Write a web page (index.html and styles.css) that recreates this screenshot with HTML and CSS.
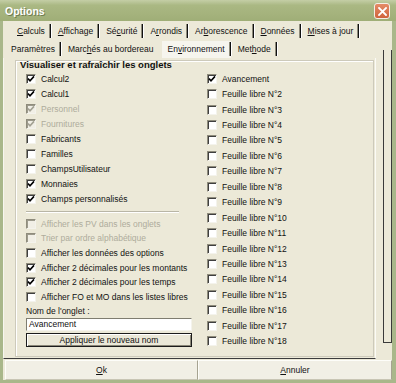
FILE: index.html
```html
<!DOCTYPE html>
<html lang="fr">
  <head>
    <meta charset="UTF-8">
    <title>Options</title>
    <link rel="stylesheet" href="styles.css">
  </head>
  <body>
    <div class="window">
      <div class="titlebar">
        <span class="title">Options</span>
        <span class="close">
          <svg width="9" height="9" viewBox="0 0 9 9"><path d="M1 1L8 8M8 1L1 8" stroke="#fff" stroke-width="1.8" stroke-linecap="square"/></svg>
        </span>
      </div>
      <div class="client">
        <div class="tabrow row1">
          <span class="tab"><u>C</u>alculs</span>
          <span class="tab"><u>A</u>ffichage</span>
          <span class="tab">Sé<u>c</u>urité</span>
          <span class="tab">A<u>r</u>rondis</span>
          <span class="tab">Ar<u>b</u>orescence</span>
          <span class="tab"><u>D</u>onnées</span>
          <span class="tab"><u>M</u>ises à jour</span>
        </div>
        <div class="tabrow row2">
          <span class="tab">Paramètres</span>
          <span class="tab nosep">Marc<u>h</u>és au bordereau</span>
          <span class="tab active">En<u>v</u>ironnement</span>
          <span class="tab">Met<u>h</u>ode</span>
        </div>
        <div class="page">
          <div class="pane">
            <div class="group">
              <div class="group-title">Visualiser et rafraîchir les onglets</div>
              <div class="cols">
                <div class="col left">
                  <div class="chk on"><span class="box"><svg viewBox="0 0 8 8"><path d="M1 3.6L3 5.8L7 1.4"/></svg></span>Calcul2</div>
                  <div class="chk on"><span class="box"><svg viewBox="0 0 8 8"><path d="M1 3.6L3 5.8L7 1.4"/></svg></span>Calcul1</div>
                  <div class="chk on off"><span class="box"><svg viewBox="0 0 8 8"><path d="M1 3.6L3 5.8L7 1.4"/></svg></span>Personnel</div>
                  <div class="chk on off"><span class="box"><svg viewBox="0 0 8 8"><path d="M1 3.6L3 5.8L7 1.4"/></svg></span>Fournitures</div>
                  <div class="chk"><span class="box"></span>Fabricants</div>
                  <div class="chk"><span class="box"></span>Familles</div>
                  <div class="chk"><span class="box"></span>ChampsUtilisateur</div>
                  <div class="chk on"><span class="box"><svg viewBox="0 0 8 8"><path d="M1 3.6L3 5.8L7 1.4"/></svg></span>Monnaies</div>
                  <div class="chk on"><span class="box"><svg viewBox="0 0 8 8"><path d="M1 3.6L3 5.8L7 1.4"/></svg></span>Champs personnalisés</div>
                  <div class="sep"></div>
                  <div class="chk small off"><span class="box"></span>Afficher les PV dans les onglets</div>
                  <div class="chk small off"><span class="box"></span>Trier par ordre alphabétique</div>
                  <div class="chk small"><span class="box"></span>Afficher les données des options</div>
                  <div class="chk small on"><span class="box"><svg viewBox="0 0 8 8"><path d="M1 3.6L3 5.8L7 1.4"/></svg></span>Afficher 2 décimales pour les montants</div>
                  <div class="chk small on"><span class="box"><svg viewBox="0 0 8 8"><path d="M1 3.6L3 5.8L7 1.4"/></svg></span>Afficher 2 décimales pour les temps</div>
                  <div class="chk small"><span class="box"></span>Afficher FO et MO dans les listes libres</div>
                  <div class="field-label">Nom de l'onglet :</div>
                  <div class="textbox">Avancement</div>
                  <div class="apply"><span>Appliquer le nouveau nom</span></div>
                </div>
                <div class="col right">
                  <div class="chk tall on"><span class="box"><svg viewBox="0 0 8 8"><path d="M1 3.6L3 5.8L7 1.4"/></svg></span>Avancement</div>
                  <div class="chk tall"><span class="box"></span>Feuille libre N°2</div>
                  <div class="chk tall"><span class="box"></span>Feuille libre N°3</div>
                  <div class="chk tall"><span class="box"></span>Feuille libre N°4</div>
                  <div class="chk tall"><span class="box"></span>Feuille libre N°5</div>
                  <div class="chk tall"><span class="box"></span>Feuille libre N°6</div>
                  <div class="chk tall"><span class="box"></span>Feuille libre N°7</div>
                  <div class="chk tall"><span class="box"></span>Feuille libre N°8</div>
                  <div class="chk tall"><span class="box"></span>Feuille libre N°9</div>
                  <div class="chk tall"><span class="box"></span>Feuille libre N°10</div>
                  <div class="chk tall"><span class="box"></span>Feuille libre N°11</div>
                  <div class="chk tall"><span class="box"></span>Feuille libre N°12</div>
                  <div class="chk tall"><span class="box"></span>Feuille libre N°13</div>
                  <div class="chk tall"><span class="box"></span>Feuille libre N°14</div>
                  <div class="chk tall"><span class="box"></span>Feuille libre N°15</div>
                  <div class="chk tall"><span class="box"></span>Feuille libre N°16</div>
                  <div class="chk tall"><span class="box"></span>Feuille libre N°17</div>
                  <div class="chk tall"><span class="box"></span>Feuille libre N°18</div>
                </div>
              </div>
            </div>
          </div>
          <div class="strip"></div>
        </div>
        <div class="footer">
          <div class="btn"><span><u>O</u>k</span></div>
          <div class="btn"><span><u>A</u>nnuler</span></div>
        </div>
      </div>
    </div>
  </body>
</html>
```

FILE: styles.css
```css
* {
    box-sizing: border-box;
}
body {
    margin: 0;
    padding: 0;
    font-family: Tahoma, "Liberation Sans", Arial, sans-serif;
    font-size: 8.5px;
    color: #111;
    background: #fff;
}
u {
    text-decoration: underline;
    text-underline-offset: 1px;
}
.window {
    width: 396px;
    height: 383px;
    display: flex;
    flex-direction: column;
    background: #ece9d8;
}
.titlebar {
    height: 21px;
    display: flex;
    align-items: center;
    justify-content: space-between;
    padding: 0 6px 0 5px;
    background: linear-gradient(to bottom, #c4cea6 0, #aab883 25%, #a4b27c 70%, #9fae77 100%);
}
.title {
    color: #fff;
    font-weight: bold;
    font-size: 10.5px;
    text-shadow: 1px 1px 0 #6f7d4f;
}
.close {
    width: 16px;
    height: 16px;
    border: 1px solid #f4eee6;
    border-radius: 3px;
    background: linear-gradient(to bottom, #e48b66, #d0643d);
    display: flex;
    align-items: center;
    justify-content: center;
    margin-top: 1px;
}
.close svg {
    display: block;
}
.client {
    flex: 1;
    display: flex;
    flex-direction: column;
    border-style: solid;
    border-color: #a9b78a;
    border-width: 0 4px 3px 3px;
}
.tabrow {
    height: 18px;
    display: flex;
    align-items: center;
}
.row1 {
    margin-top: 1px;
    padding-left: 7px;
}
.row2 {
    padding-left: 1px;
}
.tab {
    display: flex;
    align-items: center;
    height: 17px;
    padding-left: 7px;
    white-space: nowrap;
}
.tab::after {
    content: "";
    width: 1px;
    height: 14px;
    margin-left: 5px;
    background: #111;
    box-shadow: 1px 0 0 #fff, -1px 0 0 #8d8a7a;
}
.tab.nosep::after {
    background: transparent;
    box-shadow: none;
}
.tab.active {
    background: #f6f5ee;
    margin-left: 3px;
    padding-left: 5px;
}
.page {
    height: 301px;
    display: flex;
}
.pane {
    width: 373px;
    border-bottom: 1px solid #3c3c3c;
    border-right: 1px solid #fbfbf6;
    border-left: 1px solid #f7f6ef;
}
.strip {
    width: 9px;
    height: 293px;
    margin-left: 7px;
    margin-top: -8px;
    border: 1px solid #3a3a3a;
    border-top: 0;
}
.group {
    margin: 2px 0 0 11px;
    width: 359px;
    height: 297px;
    border: 1px solid #cdcabb;
    box-shadow: inset 1px 1px 0 #fff;
}
.group-title {
    font-weight: bold;
    font-size: 9.5px;
    line-height: 11px;
    margin: -2px 0 0 4px;
}
.cols {
    display: flex;
    padding-top: 1px;
}
.col.left {
    width: 191px;
    padding-left: 10px;
}
.col.right {
    flex: 1;
}
.chk {
    height: 15.1px;
    display: flex;
    align-items: center;
    white-space: nowrap;
}
.chk.small {
    height: 14.6px;
}
.chk.tall {
    height: 15.45px;
}
.box {
    width: 10px;
    height: 10px;
    margin-right: 5px;
    background: #fff;
    border: 1px solid;
    border-color: #8f8c7c #f4f3ec #f4f3ec #8f8c7c;
    box-shadow: inset 1px 1px 0 #3f3f3f;
    display: flex;
    align-items: center;
    justify-content: center;
}
.box svg {
    width: 8px;
    height: 8px;
    fill: none;
    stroke: #000;
    stroke-width: 1.6;
}
.chk.off {
    color: #aeac9c;
}
.chk.off .box {
    background: #f1efe6;
    box-shadow: inset 1px 1px 0 #9c9a8c;
}
.chk.off .box svg {
    stroke: #a3a193;
}
.sep {
    height: 9.6px;
    display: flex;
    align-items: center;
}
.sep::after {
    content: "";
    width: 153px;
    height: 1px;
    background: #b9b6a6;
    box-shadow: 0 1px 0 #fff;
}
.field-label {
    height: 14px;
    display: flex;
    align-items: center;
}
.textbox {
    width: 166px;
    height: 13px;
    background: #fff;
    border: 1px solid;
    border-color: #7f7d70 #f4f3ec #f4f3ec #7f7d70;
    padding-left: 2px;
    line-height: 11px;
}
.apply {
    width: 166px;
    height: 14px;
    margin-top: 2px;
    border: 1px solid #1c1c1c;
    box-shadow: inset 1px 1px 0 #fff, inset -1px -1px 0 #8a8778;
    display: flex;
    align-items: center;
    justify-content: center;
    background: #ebe8d8;
}
.apply span {
    padding: 0 2px;
}
.footer {
    display: flex;
    height: 21px;
    padding: 1px 0 0 2px;
}
.btn {
    height: 20px;
    display: flex;
    align-items: center;
    justify-content: center;
    background: #f1efe5;
    border: 1px solid;
    border-color: #fdfdf9 #a6a391 #c8c5b4 #fdfdf9;
}
.btn:first-child {
    width: 193px;
}
.btn:last-child {
    width: 194px;
}
```
